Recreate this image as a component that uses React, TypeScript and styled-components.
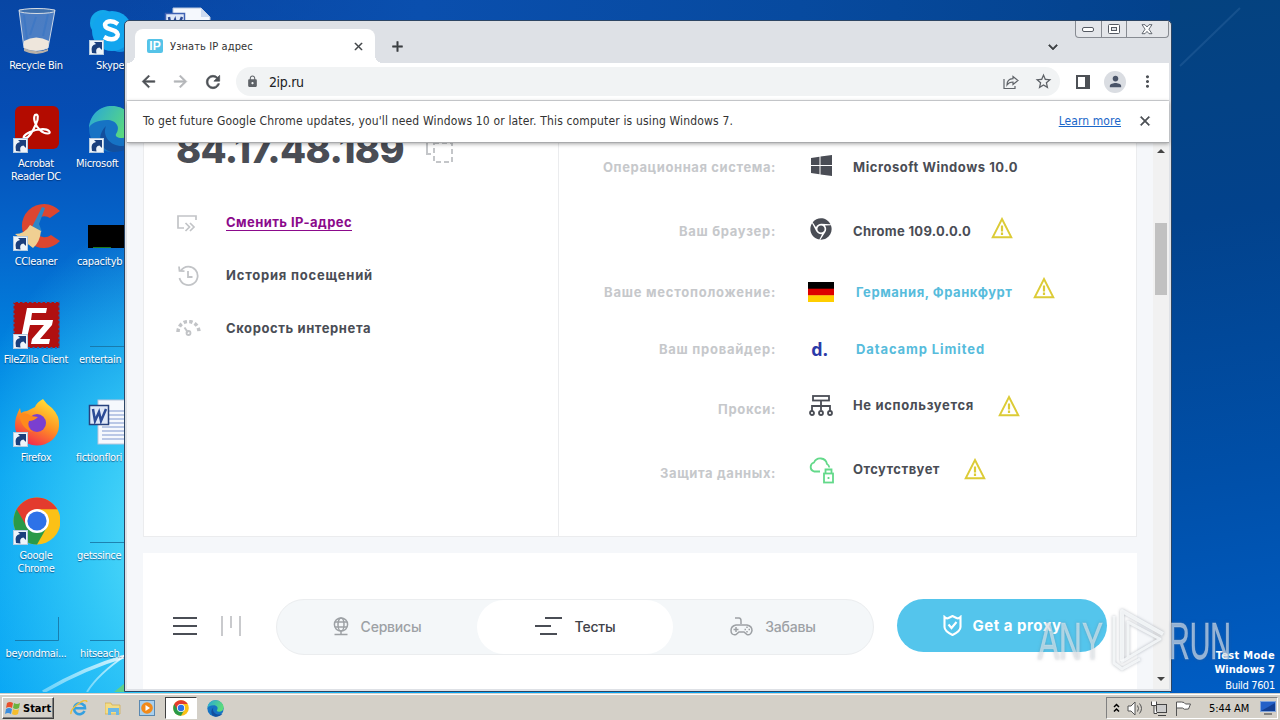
import styled, { createGlobalStyle } from "styled-components";
import { FaChrome } from "react-icons/fa";
import {
  MdArrowBack,
  MdArrowForward,
  MdRefresh,
  MdLock,
  MdStarOutline,
  MdPerson,
  MdMoreVert,
  MdClose,
  MdAdd,
  MdKeyboardArrowDown,
} from "react-icons/md";

const App = () => {
  return (
    <Desktop>
      <GlobalStyle />
      <Wallpaper />
      <DesktopIcons />
      <Browser>
        <TabStrip>
          <Tab>
            <Favicon>IP</Favicon>
            <TabTitle>Узнать IP адрес</TabTitle>
            <BoldIcon as={MdClose} size={13} />
          </Tab>
          <NewTab>
            <BoldIcon as={MdAdd} size={17} />
          </NewTab>
          <TabSearch>
            <BoldIcon as={MdKeyboardArrowDown} size={18} />
          </TabSearch>
          <Captions>
            <Caption $w={25}>
              <svg width="13" height="7" viewBox="0 0 13 7">
                <rect x="0.5" y="1.5" width="11" height="4" rx="1.5" fill="#fff" stroke="#555a63" />
              </svg>
            </Caption>
            <Caption $w={25}>
              <svg width="13" height="11" viewBox="0 0 13 11">
                <rect x="0.5" y="0.5" width="11" height="9" rx="1" fill="#fff" stroke="#555a63" />
                <rect x="3.5" y="3.5" width="5" height="3" fill="#dee1e6" stroke="#555a63" />
              </svg>
            </Caption>
            <Caption $w={42}>
              <svg width="13" height="11" viewBox="0 0 13 11">
                <path
                  d="M1 .7h3L6 3 8 .7h3L7.9 5.2 11 9.7H8L6 7.4 4 9.7H1l3.1-4.5Z"
                  fill="#fff"
                  stroke="#555a63"
                  strokeWidth="0.9"
                />
              </svg>
            </Caption>
          </Captions>
        </TabStrip>
        <Toolbar>
          <ToolButton>
            <BoldIcon as={MdArrowBack} size={19} />
          </ToolButton>
          <ToolButton $dim>
            <BoldIcon as={MdArrowForward} size={19} />
          </ToolButton>
          <ToolButton>
            <BoldIcon as={MdRefresh} size={20} />
          </ToolButton>
          <Omnibox>
            <MdLock size={13} />
            <Url>2ip.ru</Url>
            <ShareIcon />
            <MdStarOutline size={19} />
          </Omnibox>
          <ToolButton>
            <svg width="14" height="14" viewBox="0 0 14 14">
              <path d="M0 0h14v14H0Zm2 2v10h7V2Z" fill="#4d5156" fillRule="evenodd" />
            </svg>
          </ToolButton>
          <ToolButton>
            <Avatar>
              <MdPerson size={17} />
            </Avatar>
          </ToolButton>
          <ToolButton>
            <MdMoreVert size={19} />
          </ToolButton>
        </Toolbar>
        <InfoBar>
          <InfoText>
            To get future Google Chrome updates, you'll need Windows 10 or later. This computer is
            using Windows 7.
          </InfoText>
          <LearnMore>Learn more</LearnMore>
          <BoldIcon as={MdClose} size={16} />
        </InfoBar>
        <Viewport>
          <Page>
            <IpCard>
              <Left>
                <IpRow>
                  <Ip>84.17.48.189</Ip>
                  <svg width="28" height="28" viewBox="0 0 28 28" fill="none" stroke="#c4c6c9" strokeWidth="2">
                    <path d="M19 3V1H1v17h4" />
                    <rect x="8" y="7" width="18" height="19" strokeDasharray="5 3" />
                  </svg>
                </IpRow>
                <Menu>
                  <MenuItem>
                    <SwapIcon />
                    <MenuLink $track={0.42} $visited>
                      Сменить IP-адрес
                    </MenuLink>
                  </MenuItem>
                  <MenuItem>
                    <HistoryIcon />
                    <MenuLink $track={0.79}>История посещений</MenuLink>
                  </MenuItem>
                  <MenuItem>
                    <SpeedIcon />
                    <MenuLink $track={0.59}>Скорость интернета</MenuLink>
                  </MenuItem>
                </Menu>
              </Left>
              <Right>
                <InfoRow $h={48}>
                  <Label $track={0.6}>Операционная система:</Label>
                  <Glyph $lift={2}>
                    <svg width="22" height="21" viewBox="0 0 22 21" fill="#4a4d55">
                      <path d="M1 3l8.500-1.300V10H1Zm9.500-1.500L22 0v10H10.500ZM1 11h8.500v8.200L1 18Zm9.500 0H22v10l-11.500-1.600Z" />
                    </svg>
                  </Glyph>
                  <Value $track={0.54}>Microsoft Windows 10.0</Value>
                </InfoRow>
                <InfoRow $h={80}>
                  <Label $track={0.7}>Ваш браузер:</Label>
                  <Glyph $lift={2}>
                    <FaChrome size={22} color="#4a4d55" />
                  </Glyph>
                  <Value $track={0.3}>Chrome 109.0.0.0</Value>
                  <Warning $gap={20} $lift={3} />
                </InfoRow>
                <InfoRow $h={41}>
                  <Label $track={0.75}>Ваше местоположение:</Label>
                  <Glyph>
                    <Flag viewBox="0 0 26 20">
                      <path d="M0 0h26v7H0Z" fill="#000" />
                      <path d="M0 6.700h26v7H0Z" fill="#dd0000" />
                      <path d="M0 13.300h26V20H0Z" fill="#ffce00" />
                    </Flag>
                  </Glyph>
                  <Value $track={0.55} $link>
                    Германия, Франкфурт
                  </Value>
                  <Warning $gap={20} $lift={4} />
                </InfoRow>
                <InfoRow $h={73}>
                  <Label $track={0.74}>Ваш провайдер:</Label>
                  <Glyph>
                    <ProviderLogo>d.</ProviderLogo>
                  </Glyph>
                  <Value $track={0.9} $link>
                    Datacamp Limited
                  </Value>
                </InfoRow>
                <InfoRow $h={47}>
                  <Label $track={0.67}>Прокси:</Label>
                  <Glyph $lift={3}>
                    <ProxyIcon />
                  </Glyph>
                  <Value $track={0.66} $lift={4}>
                    Не используется
                  </Value>
                  <Warning $gap={24} $lift={3} />
                </InfoRow>
                <InfoRow $h={82}>
                  <Label $track={0.61}>Защита данных:</Label>
                  <Glyph $lift={3}>
                    <CloudLockIcon />
                  </Glyph>
                  <Value $track={0.45} $lift={4}>
                    Отсутствует
                  </Value>
                  <Warning $gap={24} $lift={4} />
                </InfoRow>
              </Right>
            </IpCard>
            <NavCard>
              <svg width="24" height="20" viewBox="0 0 24 20" fill="#4a4d55">
                <path d="M0 1h24v2H0ZM0 9h24v2H0ZM0 17h24v2H0Z" />
              </svg>
              <BarsIcon width="21" height="20" viewBox="0 0 21 20" fill="#c9cacd">
                <path d="M0 0h2v20H0ZM9 0h2v12H9ZM18 0h2v20h-2Z" />
              </BarsIcon>
              <Pill>
                <PillTab $w={200}>
                  <GlobeIcon />
                  Сервисы
                </PillTab>
                <PillTab $w={196} $active>
                  <svg width="28" height="19" viewBox="0 0 28 19" fill="#4a4d55">
                    <path d="M10 0h17v2H10ZM0 8h16v2H0ZM5 16h17v2H5Z" />
                  </svg>
                  Тесты
                </PillTab>
                <PillTab $w={200}>
                  <GamepadIcon />
                  Забавы
                </PillTab>
              </Pill>
              <ProxyButton>
                <svg width="19" height="21" viewBox="0 0 19 21" fill="none" stroke="#fff" strokeWidth="2.1">
                  <path d="M1.500 2q2 2 4 1l4-2 4 2q2 1 4-1v10q0 4-8 8-8-4-8-8Z" />
                  <path d="M5.500 9.500l3 3.500 5-6" />
                </svg>
                Get a proxy
              </ProxyButton>
            </NavCard>
          </Page>
          <Scrollbar>
            <svg width="8" height="4" viewBox="0 0 8 4">
              <path d="M0 4l4-4 4 4Z" fill="#444" />
            </svg>
            <Thumb />
            <svg width="8" height="4" viewBox="0 0 8 4">
              <path d="M0 0h8L4 4Z" fill="#444" />
            </svg>
          </Scrollbar>
        </Viewport>
      </Browser>
      <TestMode>
        <b>Test Mode</b>
        <b>Windows 7</b>
        <span>Build 7601</span>
      </TestMode>
      <Watermark />
      <Taskbar />
    </Desktop>
  );
};

/* ---------- desktop ---------- */

const Wallpaper = () => (
  <WallpaperSvg viewBox="0 0 1280 692">
    <defs>
      <linearGradient id="streak" x1="0" y1="1" x2="1" y2="0">
        <stop offset="0" stopColor="#bff2ff" stopOpacity="0.5" />
        <stop offset="1" stopColor="#fff" stopOpacity="0.8" />
      </linearGradient>
    </defs>
    <path d="M43 692Q84 668 126 656" stroke="url(#streak)" strokeWidth="3.500" fill="none" />
    <path d="M87 692Q98 674 126 655" stroke="url(#streak)" strokeWidth="2" fill="none" />
    <path d="M114 692l11-9v9Z" fill="#5fd08a" />
    <path d="M1180 66L1240 8" stroke="#5d8fc4" strokeOpacity="0.2" strokeWidth="2" />
  </WallpaperSvg>
);

const Shortcut = () => (
  <>
    <rect x="1.500" y="33.500" width="14" height="14" fill="#eef4fa" stroke="#b5cbe0" />
    <path d="M4 46Q2 38 8 37L6 35h8v8l-2.500-2.500Q7 41 8.500 46.500Z" fill="#1b3f7c" />
  </>
);

const ChromeLogo = ({ size }: { size: number }) => (
  <svg width={size} height={size} viewBox="0 0 48 48">
    <circle cx="24" cy="24" r="23.500" fill="#fbc116" />
    <path d="M24 24L3.650 12.250A23.500 23.500 0 0 0 24 47.500L34 30Z" fill="#2a9a48" />
    <path d="M24 24L14 30 3.650 12.250A23.500 23.500 0 0 1 44.350 12.250H24Z" fill="#e33b2e" />
    <circle cx="24" cy="24" r="12" fill="#fff" />
    <circle cx="24" cy="24" r="9.600" fill="#2d72e8" />
  </svg>
);

const EdgeLogo = ({ size }: { size: number }) => (
  <svg width={size} height={size} viewBox="0 0 48 48">
    <defs>
      <linearGradient id="edgeTop" x1="0" y1="0" x2="1" y2="0.400">
        <stop offset="0" stopColor="#27a5dc" />
        <stop offset="1" stopColor="#5cdc7a" />
      </linearGradient>
    </defs>
    <circle cx="24" cy="24" r="23" fill="#1673c4" />
    <path d="M1 23C2 9 12 1 24 1s23 9 23 20c0 8-6 12-13 12-5 0-7-2-6-4 5-7 0-14-9-14C9 15 2 19 1 23Z" fill="url(#edgeTop)" />
    <path d="M18 21c-4 10 4 20 16 20 4 0 8-1 10-2C38 46 31 47 25 47 13 46 7 32 18 21Z" fill="#124f9e" />
  </svg>
);

const DesktopIcons = () => (
  <IconGrid>
    <IconColumn>
      <IconCell>
        <IconArt viewBox="0 0 48 48">
          <path d="M7 3l5 38q12 5 24 0l7-38Z" fill="#8fb4e0" fillOpacity="0.5" stroke="#c9d6e6" />
          <path d="M12 34q12-7 25 0l-1 7q-12 5-24 0Z" fill="#eee6dc" />
          <path d="M12 8l3 24M36 7l-5 22M24 10l-6 18" stroke="#3f78c4" strokeWidth="2" />
          <ellipse cx="25" cy="4" rx="18" ry="2.500" fill="#3f70ad" stroke="#d7dde4" />
          <path d="M12 41q12 6 24 1v2q-12 6-24 0Z" fill="#b9b1a8" />
        </IconArt>
        <IconLabel>Recycle Bin</IconLabel>
      </IconCell>
      <IconCell>
        <IconArt viewBox="0 0 48 48">
          <rect x="3" y="1" width="44" height="43" rx="6" fill="#b30b00" />
          <path
            d="M23 10c3-2 4 3 1 9-3 7-7 13-10 14-4 1-3-3 4-6 7-3 16-4 19-1 3 3-4 4-9-1-5-4-7-12-5-15Z"
            fill="none"
            stroke="#fff"
            strokeWidth="2.200"
          />
          <Shortcut />
        </IconArt>
        <IconLabel>
          Acrobat
          <br />
          Reader DC
        </IconLabel>
      </IconCell>
      <IconCell>
        <IconArt viewBox="0 0 48 48">
          <path d="M48 8A22 22 0 1 0 48 38L39 32A10.500 10.500 0 1 1 38 15Z" fill="#dc4630" />
          <path d="M30 4l3 1-6 16 3 8-11-3Z" fill="#2f86c5" />
          <path d="M18 22l11 6q-1 11-8 17L3 31q10 0 15-9Z" fill="#f0cf92" />
          <Shortcut />
        </IconArt>
        <IconLabel>CCleaner</IconLabel>
      </IconCell>
      <IconCell>
        <IconArt viewBox="0 0 48 48">
          <rect x="1.500" y="1" width="46" height="46" fill="#b01010" />
          <rect x="1.500" y="1" width="46" height="46" fill="none" stroke="#1a6fc0" strokeWidth="2" strokeDasharray="2 2.500" />
          <path d="M15 7h20l-1 5H20l-1 7h11l-1 5H18l-3 13H9Z" fill="#fff" />
          <path d="M24 19h17l-1 5-12 14h10l-1 5H19l1-5 12-14h-9Z" fill="#fff" />
          <Shortcut />
        </IconArt>
        <IconLabel>FileZilla Client</IconLabel>
      </IconCell>
      <IconCell>
        <IconArt viewBox="0 0 48 48">
          <defs>
            <linearGradient id="fox" x1="0.800" y1="0" x2="0.300" y2="1">
              <stop offset="0" stopColor="#ffe63a" />
              <stop offset="0.500" stopColor="#ff9422" />
              <stop offset="1" stopColor="#f2264f" />
            </linearGradient>
          </defs>
          <path
            d="M31 0q4 6 9 9 8 8 7 18a22 20 0 0 1-44-1Q3 18 8 9l1 5q3-2 6-2l8-4q2-5 8-8Z"
            fill="url(#fox)"
          />
          <circle cx="25" cy="24" r="9" fill="#7a3fd0" />
          <path d="M7 15q8-2 12 2l7 1q-4 4-9 4-3 7 4 11-12-3-14-18Z" fill="#ff8a1c" />
          <Shortcut />
        </IconArt>
        <IconLabel>Firefox</IconLabel>
      </IconCell>
      <IconCell>
        <IconArt viewBox="0 0 48 48">
          <g transform="translate(1 0)">
            <ChromeLogo size={48} />
          </g>
          <Shortcut />
        </IconArt>
        <IconLabel>
          Google
          <br />
          Chrome
        </IconLabel>
      </IconCell>
      <IconCell>
        <IconArt viewBox="0 0 48 48">
          <path d="M3 45.500h43.500V22" fill="none" stroke="#176f9e" strokeOpacity="0.800" />
        </IconArt>
        <IconLabel>beyondmai...</IconLabel>
      </IconCell>
    </IconColumn>
    <IconColumn>
      <IconCell>
        <IconArt viewBox="0 0 48 48">
          <circle cx="15" cy="16" r="13" fill="#14a8ea" />
          <circle cx="32" cy="32" r="13" fill="#0f8fe0" />
          <circle cx="24" cy="24" r="20" fill="#12a5ee" />
          <path d="M30 17q-6-4-11-2-4 3 0 6l8 3q5 3 1 7-5 3-12-1" fill="none" stroke="#fff" strokeWidth="4.500" />
          <Shortcut />
        </IconArt>
        <IconLabel $indent={20}>Skype</IconLabel>
      </IconCell>
      <IconCell>
        <IconArt viewBox="0 0 48 48">
          <EdgeLogo size={48} />
          <Shortcut />
        </IconArt>
        <IconLabel $indent={0.1}>Microsoft</IconLabel>
      </IconCell>
      <IconCell>
        <IconArt viewBox="0 0 48 48">
          <rect x="0" y="22" width="48" height="23" fill="#000" />
          <path d="M5 44.500h18" stroke="#1c7a1c" />
        </IconArt>
        <IconLabel $indent={1}>capacityb</IconLabel>
      </IconCell>
      <IconCell>
        <IconArt viewBox="0 0 48 48">
          <path d="M2 45.500h46" stroke="#176f9e" strokeOpacity="0.800" />
        </IconArt>
        <IconLabel $indent={3}>entertain</IconLabel>
      </IconCell>
      <IconCell>
        <IconArt viewBox="0 0 48 48">
          <rect x="10" y="1" width="38" height="44" fill="#f5f8fd" stroke="#b9c6dc" />
          <path d="M14 12h34M14 16h34M14 20h34M14 24h34M14 28h34M14 32h34M14 36h34M14 40h34" stroke="#7f97cf" />
          <rect x="1.500" y="6.500" width="19" height="19" fill="#dfe8f8" stroke="#27427e" strokeWidth="1.500" />
          <path d="M5 10l2 12 4-9 2 9 5-12" fill="none" stroke="#2b4a96" strokeWidth="2.500" />
        </IconArt>
        <IconLabel $indent={0.1}>fictionflori</IconLabel>
      </IconCell>
      <IconCell>
        <IconArt viewBox="0 0 48 48">
          <path d="M2 45.500h46" stroke="#176f9e" strokeOpacity="0.800" />
        </IconArt>
        <IconLabel $indent={1}>getssince</IconLabel>
      </IconCell>
      <IconCell>
        <IconArt viewBox="0 0 48 48">
          <path d="M2 45.500h46" stroke="#176f9e" strokeOpacity="0.800" />
        </IconArt>
        <IconLabel $indent={4}>hitseach...</IconLabel>
      </IconCell>
    </IconColumn>
    <IconColumn>
      <IconCell>
        <IconArt viewBox="0 0 48 48">
          <path d="M9 1h28l9 9v35H9Z" fill="#f5f8fd" stroke="#b9c6dc" />
          <path d="M37 1l9 9h-9Z" fill="#cfdcf0" />
          <rect x="1.500" y="6.500" width="19" height="19" fill="#dfe8f8" stroke="#3f62b4" strokeWidth="1.500" />
          <path d="M5 10l2 12 4-9 2 9 5-12" fill="none" stroke="#2b4a96" strokeWidth="2.500" />
        </IconArt>
      </IconCell>
    </IconColumn>
  </IconGrid>
);

const Watermark = () => (
  <WatermarkSvg viewBox="0 0 200 70">
    <g
      fill="#e9ecf0"
      fillOpacity="0.6"
      stroke="#e9ecf0"
      strokeOpacity="0.3"
      fontFamily='"Liberation Sans", Arial, sans-serif'
      fontSize="51"
    >
      <text x="2" y="54" textLength="65" lengthAdjust="spacingAndGlyphs">
        ANY
      </text>
      <text x="133" y="54" textLength="62" lengthAdjust="spacingAndGlyphs">
        RUN
      </text>
    </g>
    <g fill="none" stroke="#f8fafc" strokeOpacity="0.850" strokeLinejoin="round">
      <path d="M86 56V6L127 29" strokeWidth="4" />
      <path d="M92 52V17L124 34 85 57" strokeWidth="3" />
      <path d="M78 11v47l8 6 18-10" strokeWidth="3" />
    </g>
  </WatermarkSvg>
);

const Taskbar = () => (
  <TaskbarWrap>
    <StartButton>
      <svg width="16" height="16" viewBox="0 0 16 16">
        <path d="M2 3q3-2 6 0L7 8Q4 6 1 8Z" fill="#e8502c" />
        <path d="M9 3q3 2 6 0l-1 5q-3 2-6 0Z" fill="#6cb33e" />
        <path d="M1 9q3-2 6 0l-1 5q-3-2-6 0Z" fill="#3b8ede" />
        <path d="M8 9q3 2 6 0l-1 5q-3 2-6 0Z" fill="#f5bd2c" />
      </svg>
      Start
    </StartButton>
    <QuickLaunch>
      <QuickItem>
        <svg width="18" height="16" viewBox="0 0 18 16" fill="none">
          <path d="M14 5.500A5.500 5.500 0 1 0 14.500 11M4 8.300h11q0-2-1-3.500" stroke="#35a0e0" strokeWidth="2.600" />
          <path d="M1 14Q0 10 8 4t9-2" stroke="#f0bf3a" strokeWidth="1.500" />
        </svg>
      </QuickItem>
      <QuickItem>
        <svg width="16" height="15" viewBox="0 0 16 15">
          <path d="M0 2h6l1 2h8v9H0Z" fill="#f3dc86" stroke="#cda94a" strokeWidth="0.700" />
          <path d="M3 7h11v7h-3v-3H6v3H3Z" fill="#6cb8e6" />
        </svg>
      </QuickItem>
      <QuickItem>
        <svg width="16" height="16" viewBox="0 0 16 16">
          <rect x="0.500" y="0.500" width="15" height="15" fill="#a9d0ee" stroke="#5a88b0" />
          <circle cx="8" cy="8" r="5.800" fill="#f28a1a" />
          <path d="M6.500 5v6l4.500-3Z" fill="#fff" />
        </svg>
      </QuickItem>
      <QuickItem $active>
        <ChromeLogo size={16} />
      </QuickItem>
      <QuickItem>
        <EdgeLogo size={17} />
      </QuickItem>
    </QuickLaunch>
    <Tray>
      <svg width="7" height="10" viewBox="0 0 7 10" fill="none" stroke="#000" strokeWidth="1.500">
        <path d="M1 4l2.500-2.500L6 4M1 8.500L3.500 6 6 8.500" />
      </svg>
      <svg width="17" height="15" viewBox="0 0 17 15" fill="#fff" stroke="#555">
        <path d="M1 5h3l4-4v13L4 10H1Z" />
        <path d="M10.500 4.500q2 3 0 6M12.500 2.500q4 5 0 10" fill="none" />
      </svg>
      <svg width="17" height="15" viewBox="0 0 17 15" fill="#fff" stroke="#444">
        <rect x="5.500" y="3.500" width="10" height="8" fill="#ccc" />
        <path d="M7 14.500h8M.5.5v4h5v-4M3 4.500v8h3" />
      </svg>
      <svg width="17" height="15" viewBox="0 0 17 15" fill="#fff" stroke="#555">
        <path d="M1.500 15V1h5q3 0 4 2h5l-2 5q-5 1-6-1h-6" />
      </svg>
      <Clock>5:44 AM</Clock>
      <svg width="16" height="14" viewBox="0 0 16 14">
        <rect x="0.500" y="0.500" width="15" height="10" fill="#2360c8" stroke="#7fa3da" />
        <path d="M1 10L15 2v8Z" fill="#123f94" />
        <path d="M4 13h8" stroke="#666" strokeWidth="1.500" />
      </svg>
    </Tray>
  </TaskbarWrap>
);

/* ---------- page icons ---------- */

const ShareIcon = () => (
  <svg width="16" height="16" viewBox="0 0 16 16" fill="none" stroke="#5f6368" strokeWidth="1.200">
    <path d="M1 5v9.500h11V12" />
    <path d="M10 2.500L15 6.500l-5 4V8Q6 8 4 11q0-6 6-6.300Z" />
  </svg>
);

const SwapIcon = () => (
  <svg width="23" height="20" viewBox="0 0 23 20" fill="none" stroke="#c2c4c7" strokeWidth="1.700">
    <path d="M20 7V3H2v12h6M9.500 10l4 4-4 4M14 10l4 4-4 4" />
  </svg>
);

const HistoryIcon = () => (
  <svg width="24" height="22" viewBox="0 0 24 22" fill="none" stroke="#c2c4c7" strokeWidth="1.800">
    <path d="M3.500 13A9.200 9.200 0 1 0 5 5.500M3 1.500L3.500 6l5 .2M12 6v6h4.500" />
  </svg>
);

const SpeedIcon = () => (
  <svg width="25" height="18" viewBox="0 0 25 18" fill="none" stroke="#c2c4c7">
    <path d="M2 12a10.500 10.500 0 0 1 21 0" strokeWidth="3.500" strokeDasharray="3.400 2.300" />
    <path d="M8.500 7.500l3.500 5" strokeWidth="2" />
    <circle cx="12.500" cy="13" r="2" strokeWidth="1.800" />
  </svg>
);

const WarningSvg = ({ className }: { className?: string }) => (
  <svg className={className} width="22" height="22" viewBox="0 0 22 22" fill="none" stroke="#dccb36">
    <path d="M11 2L20.300 20.300H1.700Z" strokeWidth="1.900" />
    <path d="M11 8.500v6M11 15.500v2.500" strokeWidth="2.200" />
  </svg>
);

const ProxyIcon = () => (
  <svg width="24" height="22" viewBox="0 0 24 22" fill="none" stroke="#4a4d55" strokeWidth="1.800">
    <rect x="4" y="1" width="16" height="4.500" />
    <path d="M12 6v9M3 16v-5h18v5" />
    <circle cx="3" cy="18" r="2" />
    <circle cx="12" cy="18" r="2" />
    <circle cx="21" cy="18" r="2" />
  </svg>
);

const CloudLockIcon = () => (
  <svg width="26" height="27" viewBox="0 0 26 27" fill="none" stroke="#63d98a" strokeWidth="1.800">
    <path d="M12 14.500H6A4.700 4.700 0 0 1 6 5.500Q8 1 13 1.500q5 .5 6 5.500 2 1 2.300 3.500" />
    <rect x="16" y="16.500" width="9" height="9" />
    <path d="M17.500 16v-3.500h6V16M20.500 20v2" />
  </svg>
);

const GlobeIcon = () => (
  <svg width="16" height="19" viewBox="0 0 16 19" fill="none" stroke="#9da1a5" strokeWidth="1.500">
    <circle cx="8" cy="7.500" r="6.600" />
    <ellipse cx="8" cy="7.500" rx="3" ry="6.600" />
    <path d="M2 5h12M2 10h12M8 14v3M1.500 17.500h13" />
  </svg>
);

const GamepadIcon = () => (
  <svg width="23" height="19" viewBox="0 0 23 19" fill="none" stroke="#9da1a5" strokeWidth="1.500">
    <path d="M5 1h4q2 0 2 3v3M6 8h11q5 1 5 5.500-1 5-5 4L14 15H9l-3 2.500q-5 1-5-4Q1 9 6 8ZM6 10v5M3.500 12.500h5" />
    <path d="M17 9.500V11M17 14v1.500M14.500 12.500H16M18.500 12.500H20" />
  </svg>
);

/* ---------- styles ---------- */

const GlobalStyle = createGlobalStyle`
  * {
    box-sizing: border-box;
  }
  body {
    margin: 0;
    overflow: hidden;
    font-family: "DejaVu Sans Condensed", "DejaVu Sans", sans-serif;
  }
  svg {
    display: block;
    flex-shrink: 0;
  }
`;

const Desktop = styled.div`
  position: relative;
  display: flex;
  flex-direction: column;
  justify-content: space-between;
  width: 1280px;
  height: 720px;
  overflow: hidden;
  background:
    linear-gradient(90deg, rgba(8, 72, 168, 0) 120px, #0a4fae 420px, #074a9f 800px, #03428c 1170px) left top / 1170px 20px no-repeat,
    linear-gradient(172deg, #04427f 0%, #02428c 30%, #004fa8 65%, #005fc8 100%) right top / 110px 100% no-repeat,
    radial-gradient(ellipse 240px 330px at 190px 540px, rgba(96, 228, 250, 1) 0, rgba(60, 208, 248, 0.8) 45%, rgba(0, 160, 245, 0) 100%),
    linear-gradient(180deg, #0846a4 0%, #054db4 16%, #0565cb 33%, #0086e2 50%, #009cf0 66%, #04a3f5 100%);
`;

const WallpaperSvg = styled.svg`
  position: absolute;
  inset: 0;
  width: 1280px;
  height: 692px;
`;

const BoldIcon = styled.svg`
  path:not([fill="none"]) {
    stroke: currentColor;
    stroke-width: 0.8px;
  }
  path[fill="none"] {
    stroke: none;
  }
`;

const IconGrid = styled.div`
  position: relative;
  display: flex;
  padding-top: 7px;
`;

const IconColumn = styled.div`
  display: flex;
  flex-direction: column;
  width: 76px;
`;

const IconCell = styled.div`
  display: flex;
  flex-direction: column;
  height: 98px;
`;

const IconArt = styled.svg`
  width: 48px;
  height: 48px;
  margin: 0 0 4px 12px;
`;

const IconLabel = styled.div<{ $indent?: number }>`
  width: ${({ $indent }) => ($indent ? "auto" : "72px")};
  padding-left: ${({ $indent }) => $indent || 0}px;
  font-size: 11px;
  line-height: 13px;
  letter-spacing: -0.32px;
  text-align: ${({ $indent }) => ($indent ? "left" : "center")};
  white-space: nowrap;
  color: #fff;
  text-shadow: 0 1px 1px rgba(0, 30, 80, 0.6);
`;

const Browser = styled.main`
  position: absolute;
  left: 124px;
  top: 20px;
  display: flex;
  flex-direction: column;
  width: 1048px;
  height: 672px;
  padding: 0 2px 2px;
  border: 1px solid #2c4564;
  border-radius: 5px 5px 0 0;
  background: #dee1e6;
  overflow: hidden;
`;

const TabStrip = styled.div`
  display: flex;
  align-items: flex-start;
  height: 42px;
  padding-left: 8px;
  color: #3c4043;
`;

const Tab = styled.div`
  position: relative;
  display: flex;
  align-items: center;
  width: 240px;
  height: 34px;
  margin-top: 8px;
  padding: 0 10px 0 12px;
  border-radius: 8px 8px 0 0;
  background: #fff;

  &::before,
  &::after {
    content: "";
    position: absolute;
    bottom: 0;
    width: 8px;
    height: 8px;
  }
  &::before {
    left: -8px;
    background: radial-gradient(circle at 0 0, transparent 8px, #fff 8px);
  }
  &::after {
    right: -8px;
    background: radial-gradient(circle at 100% 0, transparent 8px, #fff 8px);
  }
`;

const Favicon = styled.div`
  width: 16px;
  height: 14px;
  border-radius: 2px;
  background: #55c3e8;
  color: #fff;
  font: 700 12px/14px "Liberation Sans", Arial, sans-serif;
  text-align: center;
`;

const TabTitle = styled.div`
  flex: 1;
  padding-left: 7px;
  font-size: 11px;
  letter-spacing: 0.1px;
  color: #333;
`;

const NewTab = styled.div`
  margin: 17px 0 0 14px;
`;

const TabSearch = styled.div`
  margin: 17px 13px 0 auto;
`;

const Captions = styled.div`
  display: flex;
  width: 94px;
  height: 17px;
  border: 1px solid #878b92;
  border-top: 0;
  border-radius: 0 0 4px 4px;
  background: #e4e6ea;
`;

const Caption = styled.div<{ $w: number }>`
  display: flex;
  align-items: center;
  justify-content: center;
  width: ${({ $w }) => $w}px;

  & + & {
    border-left: 1px solid #878b92;
  }
`;

const Toolbar = styled.div`
  display: flex;
  align-items: center;
  height: 38px;
  padding: 0 6px;
  border-bottom: 1px solid #d5d7da;
  background: #fff;
`;

const ToolButton = styled.div<{ $dim?: boolean }>`
  display: flex;
  align-items: center;
  justify-content: center;
  width: 32px;
  color: ${({ $dim }) => ($dim ? "#b4b6b9" : "#4d5156")};
`;

const Omnibox = styled.div`
  display: flex;
  align-items: center;
  width: 825px;
  height: 29px;
  margin: 0 7px 0 7px;
  padding: 0 7px 0 10px;
  border-radius: 15px;
  background: #f1f3f4;
  color: #5f6368;

  & > svg:last-child {
    margin-left: 15px;
  }
`;

const Url = styled.div`
  flex: 1;
  padding-left: 10px;
  font-size: 14px;
  letter-spacing: -0.3px;
  color: #202124;
`;

const Avatar = styled.div`
  display: flex;
  align-items: center;
  justify-content: center;
  width: 22px;
  height: 22px;
  border-radius: 50%;
  background: #dadde2;
  color: #4a5468;
`;

const InfoBar = styled.div`
  position: relative;
  z-index: 1;
  display: flex;
  align-items: center;
  height: 42px;
  padding: 0 16px 1px;
  border-bottom: 1px solid #a9aaac;
  background: #fff;
  box-shadow: 0 1px 4px rgba(0, 0, 0, 0.35);
  font-size: 12px;
  color: #4d5156;
`;

const InfoText = styled.div`
  flex: 1;
  letter-spacing: 0.16px;
  color: #333;
`;

const LearnMore = styled.a`
  margin-right: 16px;
  letter-spacing: 0.08px;
  color: #1a66c9;
  text-decoration: underline;
`;

const Viewport = styled.div`
  display: flex;
  flex: 1;
  min-height: 0;
  background: #f5f7fa;
`;

const Page = styled.div`
  flex: 1;
  padding: 0 16px;
  overflow: hidden;
  font-family: Inter, "Open Sans", sans-serif;
`;

const IpCard = styled.section`
  display: flex;
  height: 394px;
  border: 1px solid #ebecee;
  border-top: 0;
  background: #fff;
`;

const Left = styled.div`
  width: 415px;
  padding-left: 32px;
  border-right: 1px solid #ebecee;
`;

const IpRow = styled.div`
  display: flex;
  align-items: flex-end;
  height: 29px;
  overflow: hidden;

  svg {
    margin: 0 0 8px 21px;
  }
`;

const Ip = styled.div`
  width: 229px;
  font-size: 38px;
  font-weight: 800;
  line-height: 46px;
  letter-spacing: -0.63px;
  color: #4a4d55;
`;

const Menu = styled.nav`
  margin-top: 24px;
`;

const MenuItem = styled.div`
  display: grid;
  grid-template-columns: 50px auto;
  align-items: center;
  height: 53px;
`;

const MenuLink = styled.a<{ $track: number; $visited?: boolean }>`
  justify-self: start;
  font-size: 13px;
  font-weight: 700;
  line-height: 15px;
  letter-spacing: ${({ $track }) => $track}px;
  color: ${({ $visited }) => ($visited ? "#8b0a8b" : "#4a4d55")};
  border-bottom: 1px solid ${({ $visited }) => ($visited ? "#8b0a8b" : "transparent")};
`;

const Right = styled.div`
  flex: 1;
`;

const InfoRow = styled.div<{ $h: number }>`
  display: flex;
  align-items: center;
  height: ${({ $h }) => $h}px;
`;

const Label = styled.div<{ $track: number }>`
  width: 217px;
  font-size: 13px;
  font-weight: 700;
  letter-spacing: ${({ $track }) => $track}px;
  text-align: right;
  white-space: nowrap;
  color: #c6c8cb;
`;

const Glyph = styled.div<{ $lift?: number }>`
  display: flex;
  justify-content: center;
  width: 26px;
  margin: 0 0 ${({ $lift = 0 }) => $lift * 2}px 32px;
`;

const Value = styled.div<{ $track: number; $lift?: number; $link?: boolean }>`
  margin: 0 0 ${({ $lift = 0 }) => $lift * 2}px ${({ $link }) => ($link ? 22 : 19)}px;
  font-size: 13px;
  font-weight: 700;
  letter-spacing: ${({ $track }) => $track}px;
  white-space: nowrap;
  color: ${({ $link }) => ($link ? "#57bcdc" : "#4a4d55")};
`;

const Warning = styled(WarningSvg)<{ $gap: number; $lift: number }>`
  margin: 0 0 ${({ $lift }) => $lift * 2}px ${({ $gap }) => $gap}px;
`;

const Flag = styled.svg`
  width: 26px;
  height: 20px;
`;

const ProviderLogo = styled.div`
  padding-right: 3px;
  font: 700 18px/20px "Open Sans", sans-serif;
  color: #2b3aa8;
`;

const NavCard = styled.section`
  display: flex;
  align-items: flex-start;
  height: 160px;
  margin-top: 16px;
  padding: 46px 0 0 30px;
  background: #fff;

  & > svg {
    margin-top: 17px;
  }
`;

const BarsIcon = styled.svg`
  margin-left: 24px;
`;

const Pill = styled.div`
  display: flex;
  width: 598px;
  height: 56px;
  margin-left: 34px;
  border: 1px solid #ebedef;
  border-radius: 28px;
  background: #f4f7f9;
`;

const PillTab = styled.div<{ $w: number; $active?: boolean }>`
  display: flex;
  align-items: center;
  justify-content: center;
  gap: 12px;
  width: ${({ $w }) => $w}px;
  padding-bottom: 2px;
  border-radius: 27px;
  background: ${({ $active }) => ($active ? "#fff" : "transparent")};
  font-size: 14px;
  font-weight: 500;
  letter-spacing: -0.2px;
  color: ${({ $active }) => ($active ? "#3f4249" : "#9da1a5")};
`;

const ProxyButton = styled.button`
  display: flex;
  align-items: center;
  justify-content: center;
  gap: 11px;
  width: 210px;
  height: 53px;
  margin-left: 23px;
  border: 0;
  border-radius: 27px;
  background: #54c5ec;
  font: 700 15px Inter, sans-serif;
  letter-spacing: 0.5px;
  color: #fff;
`;

const Scrollbar = styled.div`
  display: flex;
  flex-direction: column;
  align-items: center;
  justify-content: space-between;
  width: 16px;
  padding: 6px 0 8px;
  background: #f1f1f1;
`;

const Thumb = styled.div`
  width: 12px;
  height: 72px;
  margin: 70px 0 auto;
  background: #c1c1c1;
`;

const TestMode = styled.div`
  position: absolute;
  right: 5px;
  top: 649px;
  display: flex;
  flex-direction: column;
  align-items: flex-end;
  font-size: 11px;
  line-height: 14px;
  color: #fff;

  b:first-child {
    letter-spacing: 0.3px;
  }
  span {
    margin-top: 2px;
    letter-spacing: -0.35px;
  }
`;

const WatermarkSvg = styled.svg`
  position: absolute;
  left: 1036px;
  top: 605px;
  width: 200px;
  height: 70px;
  overflow: visible;
  filter: drop-shadow(0 0 1.5px rgba(90, 100, 115, 0.5));
`;

const TaskbarWrap = styled.footer`
  position: relative;
  display: flex;
  align-items: center;
  height: 28px;
  padding: 2px 2px 0;
  border-top: 1px solid #d4d0c8;
  box-shadow: inset 0 1px 0 #fff;
  background: #d4d0c8;
`;

const StartButton = styled.button`
  display: flex;
  align-items: center;
  gap: 2px;
  width: 52px;
  height: 22px;
  padding: 0 2px;
  border: 1px solid;
  border-color: #fff #404040 #404040 #fff;
  box-shadow: inset -1px -1px 0 #808080;
  background: #d4d0c8;
  font: 700 11px "DejaVu Sans Condensed", sans-serif;
  color: #000;
`;

const QuickLaunch = styled.div`
  display: flex;
  gap: 2px;
  margin-left: 9px;
`;

const QuickItem = styled.div<{ $active?: boolean }>`
  display: flex;
  align-items: center;
  justify-content: center;
  width: 32px;
  height: 22px;
  border: 1px solid;
  border-color: ${({ $active }) => ($active ? "#404040 #fff #fff #404040" : "transparent")};
  background: ${({ $active }) => ($active ? "#fff" : "transparent")};
`;

const Tray = styled.div`
  display: flex;
  align-items: center;
  gap: 7px;
  width: 172px;
  height: 22px;
  margin-left: auto;
  padding: 0 1px 0 6px;
  border: 1px solid;
  border-color: #808080 #fff #fff #808080;
`;

const Clock = styled.div`
  flex: 1;
  padding-left: 10px;
  font-size: 11px;
  letter-spacing: -0.05px;
  white-space: nowrap;
`;

export default App;
